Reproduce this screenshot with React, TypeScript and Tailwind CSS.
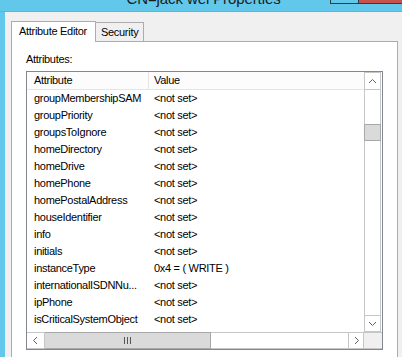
import React from 'react';

const rows: [string, string][] = [
	['groupMembershipSAM', '<not set>'],
	['groupPriority', '<not set>'],
	['groupsToIgnore', '<not set>'],
	['homeDirectory', '<not set>'],
	['homeDrive', '<not set>'],
	['homePhone', '<not set>'],
	['homePostalAddress', '<not set>'],
	['houseIdentifier', '<not set>'],
	['info', '<not set>'],
	['initials', '<not set>'],
	['instanceType', '0x4 = ( WRITE )'],
	['internationalISDNNu...', '<not set>'],
	['ipPhone', '<not set>'],
	['isCriticalSystemObject', '<not set>'],
];

const Chevron = ({ dir }: { dir: 'up' | 'down' | 'left' | 'right' }) => {
	const pts = {
		up: '1,5 4.5,1.5 8,5',
		down: '1,2 4.5,5.5 8,2',
		left: '5,1 1.5,4.5 5,8',
		right: '2,1 5.5,4.5 2,8',
	}[dir];
	const vertical = dir === 'up' || dir === 'down';
	return (
		<svg
			width={vertical ? 9 : 7}
			height={vertical ? 7 : 9}
			viewBox={vertical ? '0 0 9 7' : '0 0 7 9'}
		>
			<polyline points={pts} fill="none" stroke="#606060" strokeWidth="1" />
		</svg>
	);
};

const VScroll = () => (
	<div className="w-[18px] h-full">
		<div className="w-[17px] h-full flex flex-col border-x border-[#c6c6c6]">
			<div className="h-[18px] border-y border-[#c6c6c6] flex items-center justify-center">
				<Chevron dir="up" />
			</div>
			<div className="flex-1 bg-white">
				<div className="mt-[34px] -mx-px h-[17px] bg-[#dadada] border border-[#a8a8a8]" />
			</div>
			<div className="h-[17px] border-y border-[#c6c6c6] flex items-center justify-center">
				<Chevron dir="down" />
			</div>
		</div>
	</div>
);

const HScroll = () => (
	<div className="h-[17px] flex border-y border-[#c6c6c6]">
		<div className="w-[18px] border-r border-[#c6c6c6] flex items-center justify-center bg-white">
			<Chevron dir="left" />
		</div>
		<div className="w-[166px] -my-px bg-[#dadada] border border-l-0 border-[#a8a8a8] flex items-center justify-center">
			<svg width="7" height="7" viewBox="0 0 7 7">
				<rect x="0" y="0" width="1" height="7" fill="#555" />
				<rect x="3" y="0" width="1" height="7" fill="#555" />
				<rect x="6" y="0" width="1" height="7" fill="#555" />
			</svg>
		</div>
		<div className="flex-1 bg-white" />
		<div className="w-[16px] border-x border-[#c6c6c6] flex items-center justify-center bg-white">
			<Chevron dir="right" />
		</div>
		<div className="w-[18px] bg-[#f0f0f0]" />
	</div>
);

const AttributeList = () => (
	<div className="w-[357px] h-[279px] border border-[#828790] bg-white flex flex-col">
		<div className="flex flex-1">
			<div className="flex-1 flex flex-col">
				<div className="h-[18px] flex items-center border-b border-[#e5e5e5] bg-[#fcfcfc]">
					<div className="w-[122px] h-full pl-[7px] flex items-center border-r border-[#e5e5e5]">
						Attribute
					</div>
					<div className="pl-[5px]">Value</div>
				</div>
				{rows.map(([name, value]) => (
					<div key={name} className="h-[17px] flex items-center">
						<div className="w-[122px] pl-[7px]">{name}</div>
						<div className="pl-[5px]">{value}</div>
					</div>
				))}
			</div>
			<VScroll />
		</div>
		<HScroll />
	</div>
);

export default function App() {
	return (
		<div className="w-[402px] h-[357px] overflow-hidden bg-[#f0f0f0] flex flex-col font-['Liberation_Sans',Arial,sans-serif] text-[11px] tracking-[-0.3px] text-black leading-[15px]">
			<header className="h-[12px] shrink-0 overflow-hidden bg-[#62c8eb] border-b border-[#57b7d9] grid grid-cols-[1fr_auto_1fr] items-start pl-[5px]">
				<div />
				<h1 className="-mt-[9px] text-[15px] leading-[15px] tracking-[-0.1px] text-[#1b1b1b] whitespace-nowrap">
					CN=jack wei Properties
				</h1>
				<div className="flex justify-end">
					<div className="w-[28px] h-[4px] border-l border-b border-[#2c3a42]" />
					<div className="w-[44px] h-[4px] bg-[#c7514b] border-l border-b border-[#2c3a42]" />
				</div>
			</header>
			<div className="flex flex-1">
				<div className="w-[5px] bg-[#62c8eb]" />
				<div className="flex-1 flex flex-col pl-[6px] pr-[4px] pt-[9px]">
					<nav className="flex items-end">
						<div className="relative z-10 -mb-px h-[21px] w-[85px] pl-[7px] pt-[2px] bg-white border border-b-0 border-[#acacac]">
							Attribute Editor
						</div>
						<div className="h-[19px] w-[48px] pl-[5px] pt-[2px] bg-[#f0f0f0] border border-l-0 border-b-0 border-[#acacac]">
							Security
						</div>
					</nav>
					<section className="flex-1 bg-white border border-b-0 border-[#acacac] pl-[14px] pt-[10px]">
						<p>Attributes:</p>
						<div className="mt-[4px]">
							<AttributeList />
						</div>
					</section>
				</div>
			</div>
		</div>
	);
}
